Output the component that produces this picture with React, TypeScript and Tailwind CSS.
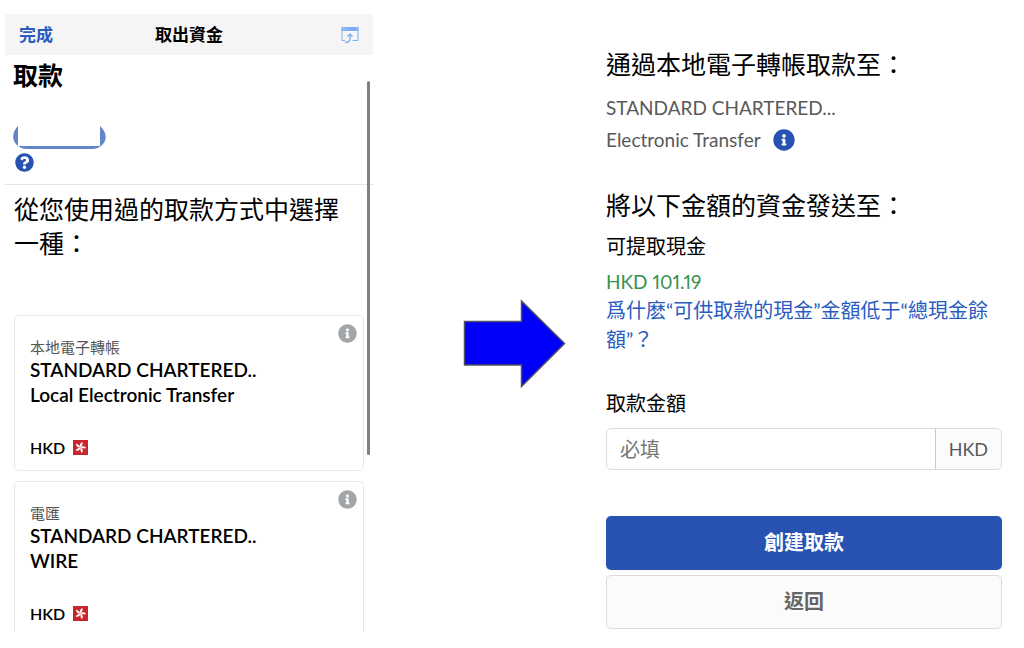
import { useState } from "react";
import { FaInfoCircle, FaQuestionCircle } from "react-icons/fa";

type Method = {
	id: string;
	type: string;
	bank: string;
	channel: string;
	currency: string;
};

const methods: Method[] = [
	{ id: "eft", type: "本地電子轉帳", bank: "STANDARD CHARTERED..", channel: "Local Electronic Transfer", currency: "HKD" },
	{ id: "wire", type: "電匯", bank: "STANDARD CHARTERED..", channel: "WIRE", currency: "HKD" },
];

function BrowserIcon() {
	return (
		<svg width="18" height="18" viewBox="0 0 18 18" fill="none" stroke="#7fb0f5" aria-hidden="true">
			<path d="M4 14.500H1V1.500h16v13h-5.500" strokeWidth="1" />
			<path d="M1 1.500h16v3H1z" fill="#9cc3fa" strokeWidth="1" />
			<path d="M3 3h1M5 3h1M7 3h8" stroke="#5b93ea" strokeWidth="1" />
			<path d="M9 8v4.500q0 4-5 4M6.500 10.500L9 8l2.500 2.500" strokeWidth="1.400" />
		</svg>
	);
}

function HongKongFlag() {
	return (
		<svg width="15" height="15" viewBox="0 0 15 15" aria-hidden="true">
			<rect width="15" height="15" fill="#c9252f" />
			{[22, 94, 166, 238, 310].map((angle) => (
				<path key={angle} d="M7.500 7.500C5.400 6 5.500 2.600 7.800 1.800C7.700 3.200 8.900 4.800 7.500 7.500Z" fill="#fff" transform={`rotate(${angle} 7.500 7.500)`} />
			))}
		</svg>
	);
}

function MethodCard({ method, cut }: { method: Method; cut: boolean }) {
	return (
		<li className={`relative border border-[#e6e6e6] px-[15px] pt-[21px] ${cut ? "rounded-t-[5px] border-b-0 pb-[6px]" : "rounded-[5px] pb-[10px]"}`}>
			<button aria-label={method.type} className="absolute top-2 right-[6px] text-[19px] text-[#a3a6a8]">
				<FaInfoCircle />
			</button>
			<p className="text-[15px] leading-5 text-[#555]">{method.type}</p>
			<h3 className="text-[19px] leading-[25px] font-semibold">{method.bank}</h3>
			<p className="text-[19px] leading-[25px] font-semibold">{method.channel}</p>
			<p className="mt-7 flex items-center gap-2 text-[16px] leading-[25px] font-semibold">
				{method.currency}
				<HongKongFlag />
			</p>
		</li>
	);
}

function MethodsPanel() {
	return (
		<section className="relative mt-[14px]">
			<header className="grid h-[41px] grid-cols-3 items-center bg-[#f5f5f5] px-[14px] text-[17px] font-bold">
				<button className="justify-self-start text-[#2a5bbf]">完成</button>
				<h1 className="justify-self-center">取出資金</h1>
				<button aria-label="在瀏覽器中打開" className="justify-self-end">
					<BrowserIcon />
				</button>
			</header>

			<div className="border-b border-[#e4e4e4] px-[8px] pt-[3px] pb-3">
				<h2 className="text-[25px] leading-[34px] font-bold">取款</h2>
				<svg className="mt-[34px]" width="93" height="23" viewBox="0 0 93 23" fill="#6286c9" aria-hidden="true">
					<path d="M5 0C-1 6-1 14 3 18Q7 23 14 23H79Q86 23 90 18C94 14 94 6 87 0V20H5Z" />
				</svg>
				<button aria-label="帳戶說明" className="mt-1 ml-[2px] block text-[19px] text-[#2752b2]">
					<FaQuestionCircle />
				</button>
			</div>

			<div className="px-[9px] pt-[7px]">
				<h2 className="pr-3 text-[25px] leading-[34px]">從您使用過的取款方式中選擇一種：</h2>
				<ul className="mt-[55px] flex flex-col gap-[10px]">
					{methods.map((m, i) => (
						<MethodCard key={m.id} method={m} cut={i === methods.length - 1} />
					))}
				</ul>
			</div>

			{/* scroll thumb */}
			<div className="absolute top-[67px] right-[3px] h-[374px] w-[3px] rounded-full bg-[#808080]" />
		</section>
	);
}

function WithdrawForm() {
	const [amount, setAmount] = useState("");

	return (
		<form className="mt-[47px]" onSubmit={(e) => e.preventDefault()}>
			<h2 className="text-[25px] leading-[34px]">通過本地電子轉帳取款至：</h2>
			<div className="mt-[11px] text-[19px] leading-8 text-[#58595b]">
				<p>STANDARD CHARTERED...</p>
				<p className="flex items-center gap-3">
					Electronic Transfer
					<button type="button" aria-label="轉帳說明" className="text-[22px] text-[#2752b2]">
						<FaInfoCircle />
					</button>
				</p>
			</div>

			<h2 className="mt-8 text-[25px] leading-[34px]">將以下金額的資金發送至：</h2>
			<h3 className="mt-[9px] text-[20px] leading-[30px]">可提取現金</h3>
			<p className="mt-[7px] text-[19px] leading-7 text-[#37914f] proportional-nums">HKD 101.19</p>
			<a href="#cash" className="block text-[20px] leading-[29px] text-[#2a5bbf]">
				爲什麽“可供取款的現金”金額低于“總現金餘額”？
			</a>

			<label htmlFor="amount" className="mt-[34px] block text-[20px] leading-[30px]">
				取款金額
			</label>
			<div className="mt-[10px] flex h-[42px] rounded-[5px] border border-[#dcdcdc]">
				<input
					id="amount"
					value={amount}
					onChange={(e) => setAmount(e.target.value)}
					placeholder="必填"
					className="min-w-0 flex-1 rounded-l-[5px] px-[13px] text-[20px] outline-none placeholder:text-[#75787b]"
				/>
				<span className="flex items-center rounded-r-[5px] border-l border-[#c8c8c8] bg-[#fbfbfb] px-[13px] text-[18px] text-[#58595b]">HKD</span>
			</div>

			<div className="mt-[46px] flex flex-col gap-[5px] text-[20px] font-bold">
				<button type="submit" className="h-[54px] rounded-[5px] bg-[#2752b2] pb-[2px] text-white">創建取款</button>
				<button type="button" className="h-[54px] rounded-[5px] border border-[#dcdcdc] bg-[#fbfbfb] pb-[2px] text-[#666]">返回</button>
			</div>
		</form>
	);
}

export default function App() {
	return (
		<main className="grid min-h-screen grid-cols-[368fr_233fr_396fr] items-start bg-white pr-[22px] pl-[5px] font-['Lato','Noto_Sans_CJK_TC',sans-serif] text-black">
			<MethodsPanel />
			<div className="mt-[299px] flex justify-end pr-10">
				<svg width="103" height="90" viewBox="0 0 103 90" aria-hidden="true">
					<path d="M1.500 22.500H58.500V2L101.500 44.500L58.500 87.500V66H1.500Z" fill="#0000fa" stroke="#505060" strokeWidth="1.500" />
				</svg>
			</div>
			<WithdrawForm />
		</main>
	);
}
